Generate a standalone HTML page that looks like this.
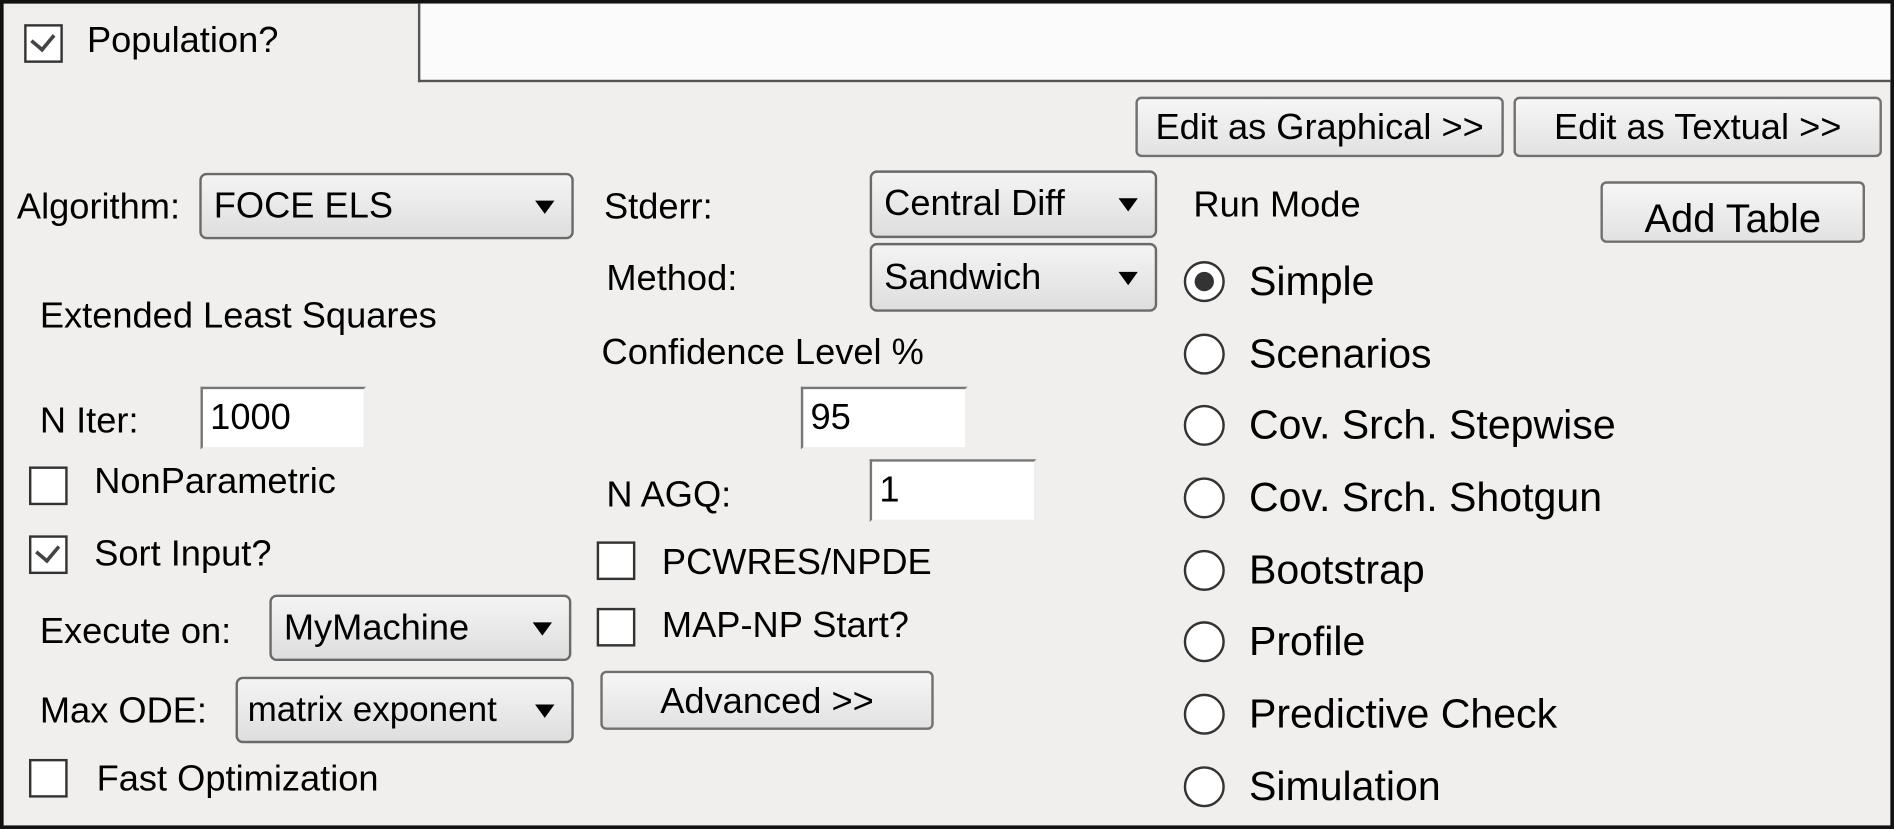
<!DOCTYPE html>
<html><head><meta charset="utf-8"><style>
html,body{margin:0;padding:0;width:1894px;height:829px;overflow:hidden;background:#000}
#w{position:absolute;left:0;top:0;width:1568px;height:686px;transform:scale(1.2079,1.2085);transform-origin:0 0;background:#f0efed;font-family:"Liberation Sans",sans-serif;color:#000;}
.a{position:absolute;white-space:nowrap}
.t{font-size:30px;letter-spacing:0;line-height:30px}
.cb{position:absolute;width:32px;height:32px;border:2px solid #333;background:#fff;box-sizing:border-box}
.dd{position:absolute;border:2px solid #6a6a6a;border-radius:6px;background:linear-gradient(#f4f4f4,#dedede);box-sizing:border-box}
.dd span{position:absolute;left:10px;top:50%;transform:translateY(-50%);font-size:30px}
.dd i{position:absolute;right:14px;top:50%;margin-top:-5px;width:0;height:0;border-left:8px solid transparent;border-right:8px solid transparent;border-top:11px solid #000}
.tb{position:absolute;background:#fff;border:2px solid #777;border-right-color:#eee;border-bottom-color:#eee;box-sizing:border-box}
.tb span{position:absolute;left:6px;top:50%;transform:translateY(-50%);font-size:30px}
.bt{position:absolute;border:2px solid #707070;border-radius:5px;background:linear-gradient(#f6f6f6,#e2e2e2);box-sizing:border-box;text-align:center;font-size:30px}
.rd{position:absolute;width:34px;height:34px;border:2px solid #333;border-radius:50%;background:#fff;box-sizing:border-box}
.rl{position:absolute;font-size:34px;line-height:34px}
.ck{position:absolute;width:16px;height:9px;border-left:3px solid #444;border-bottom:3px solid #444;transform:rotate(-50deg)}
</style></head><body><div id="w">
<div class="a" style="left:0;top:0;width:1568px;height:686px;border:3px solid #111;box-sizing:border-box"></div>
<div class="a" style="left:346px;top:3px;width:1219px;height:65px;background:#fbfbfb;border-left:2px solid #555;border-bottom:2px solid #555;box-sizing:border-box"></div>
<div class="cb" style="left:20px;top:20px"></div><div class="ck" style="left:27px;top:26px;width:14px;height:10px"></div>
<div class="a t" style="left:72px;top:19px">Population?</div>

<div class="bt" style="left:940px;top:80px;width:305px;height:50px;line-height:48px">Edit as Graphical &gt;&gt;</div>
<div class="bt" style="left:1253px;top:80px;width:305px;height:50px;line-height:48px">Edit as Textual &gt;&gt;</div>

<div class="a t" style="left:14px;top:157px">Algorithm:</div>
<div class="dd" style="left:165px;top:143px;width:310px;height:55px"><span>FOCE ELS</span><i></i></div>
<div class="a t" style="left:33px;top:247px">Extended Least Squares</div>
<div class="a t" style="left:33px;top:334px">N Iter:</div>
<div class="tb" style="left:166px;top:320px;width:137px;height:52px"><span>1000</span></div>
<div class="cb" style="left:24px;top:386px"></div>
<div class="a t" style="left:78px;top:384px">NonParametric</div>
<div class="cb" style="left:24px;top:443px"></div><div class="ck" style="left:31px;top:449px;width:14px;height:10px"></div>
<div class="a t" style="left:78px;top:444px">Sort Input?</div>
<div class="a t" style="left:33px;top:508px">Execute on:</div>
<div class="dd" style="left:223px;top:492px;width:250px;height:55px"><span>MyMachine</span><i></i></div>
<div class="a t" style="left:33px;top:574px">Max ODE:</div>
<div class="dd" style="left:195px;top:560px;width:280px;height:55px"><span style="left:8px;font-size:29px">matrix exponent</span><i></i></div>
<div class="cb" style="left:24px;top:628px"></div>
<div class="a t" style="left:80px;top:630px">Fast Optimization</div>

<div class="a t" style="left:500px;top:157px">Stderr:</div>
<div class="dd" style="left:720px;top:141px;width:238px;height:56px"><span>Central Diff</span><i></i></div>
<div class="a t" style="left:502px;top:216px">Method:</div>
<div class="dd" style="left:720px;top:201px;width:238px;height:57px"><span>Sandwich</span><i></i></div>
<div class="a t" style="left:498px;top:277px">Confidence Level %</div>
<div class="tb" style="left:663px;top:320px;width:138px;height:52px"><span>95</span></div>
<div class="a t" style="left:502px;top:395px">N AGQ:</div>
<div class="tb" style="left:720px;top:380px;width:138px;height:52px"><span>1</span></div>
<div class="cb" style="left:494px;top:448px"></div>
<div class="a t" style="left:548px;top:451px">PCWRES/NPDE</div>
<div class="cb" style="left:494px;top:503px"></div>
<div class="a t" style="left:548px;top:503px">MAP-NP Start?</div>
<div class="bt" style="left:497px;top:555px;width:276px;height:49px;line-height:47px">Advanced &gt;&gt;</div>

<div class="a t" style="left:988px;top:155px">Run Mode</div>
<div class="bt" style="left:1325px;top:150px;width:219px;height:51px;line-height:58px;font-size:33px">Add Table</div>

<div class="rd" style="left:980px;top:216px"></div><div class="a" style="left:989px;top:225px;width:16px;height:16px;border-radius:50%;background:#333"></div>
<div class="rl" style="left:1034px;top:216px">Simple</div>
<div class="rd" style="left:980px;top:276px"></div><div class="rl" style="left:1034px;top:276px">Scenarios</div>
<div class="rd" style="left:980px;top:335px"></div><div class="rl" style="left:1034px;top:335px">Cov. Srch. Stepwise</div>
<div class="rd" style="left:980px;top:395px"></div><div class="rl" style="left:1034px;top:395px">Cov. Srch. Shotgun</div>
<div class="rd" style="left:980px;top:455px"></div><div class="rl" style="left:1034px;top:455px">Bootstrap</div>
<div class="rd" style="left:980px;top:514px"></div><div class="rl" style="left:1034px;top:514px">Profile</div>
<div class="rd" style="left:980px;top:574px"></div><div class="rl" style="left:1034px;top:574px">Predictive Check</div>
<div class="rd" style="left:980px;top:634px"></div><div class="rl" style="left:1034px;top:634px">Simulation</div>
</div></body></html>
